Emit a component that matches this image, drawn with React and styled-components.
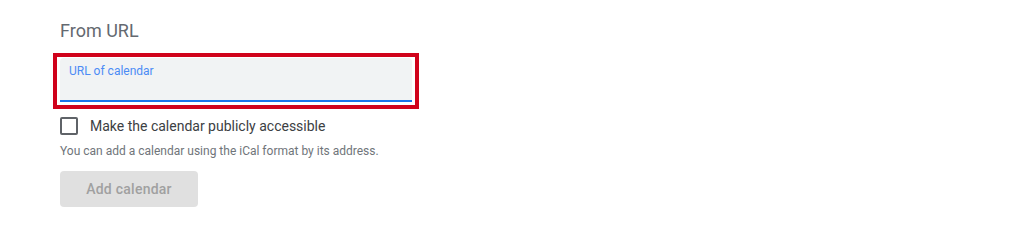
import React, { useState } from "react";
import styled, { createGlobalStyle } from "styled-components";

const Global = createGlobalStyle`
  html, body { margin: 0; padding: 0; background: #ffffff; }
  body { font-family: Roboto, "Liberation Sans", Arial, sans-serif; }
  * { box-sizing: border-box; }
`;

const Page = styled.div`
  padding: 19px 0 0 60px;
  width: 1036px;
  height: 223px;
`;

const Title = styled.h2`
  margin: 0;
  font-size: 18px;
  line-height: 24px;
  font-weight: 400;
  color: #646970;
`;

const Highlight = styled.div`
  margin: 10px 0 0 -7px;
  width: 366px;
  border: 4px solid #d0021b;
  padding: 1px 3px 3px 3px;
`;

const Field = styled.label`
  display: block;
  height: 44px;
  background: #f1f3f4;
  border-radius: 4px 4px 0 0;
  border-bottom: 2px solid #1a73e8;
  padding: 5px 8px 0 9px;
`;

const FieldLabel = styled.span`
  display: block;
  font-size: 12px;
  line-height: 16px;
  color: #4c8bf5;
`;

const CheckRow = styled.label`
  display: flex;
  align-items: center;
  gap: 12px;
  margin-top: 8px;
  height: 18px;
  cursor: pointer;
`;

const Box = styled.span`
  width: 18px;
  height: 18px;
  border: 2px solid #5f6368;
  border-radius: 2px;
  flex: none;
  background: ${(p) => (p.$checked ? "#1a73e8" : "transparent")};
`;

const CheckText = styled.span`
  font-size: 14px;
  line-height: 18px;
  color: #3c4043;
`;

const Helper = styled.p`
  margin: 8px 0 0 0;
  font-size: 12px;
  line-height: 16px;
  color: #70757a;
`;

const Button = styled.button`
  display: block;
  margin-top: 12px;
  width: 138px;
  height: 36px;
  border: none;
  border-radius: 4px;
  background: #e0e0e0;
  color: #a0a0a0;
  font-family: inherit;
  font-size: 14px;
  font-weight: 500;
  letter-spacing: 0.25px;
  padding: 0;
`;

export default function App() {
  const [checked, setChecked] = useState(false);
  return (
    <Page>
      <Global />
      <Title>From URL</Title>
      <Highlight>
        <Field>
          <FieldLabel>URL of calendar</FieldLabel>
        </Field>
      </Highlight>
      <CheckRow onClick={() => setChecked(!checked)}>
        <Box $checked={checked} />
        <CheckText>Make the calendar publicly accessible</CheckText>
      </CheckRow>
      <Helper>You can add a calendar using the iCal format by its address.</Helper>
      <Button disabled>Add calendar</Button>
    </Page>
  );
}
